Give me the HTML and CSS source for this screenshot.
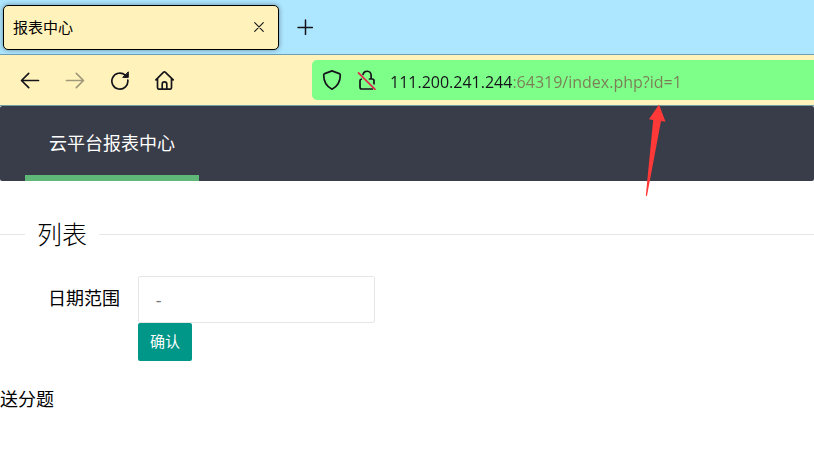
FILE: index.html
```
<!DOCTYPE html>
<html lang="zh-CN">
<head>
    <meta charset="UTF-8">
    <meta name="viewport" content="width=device-width, initial-scale=1.0">
    <title>报表中心</title>
    <link rel="stylesheet" href="styles.css">
</head>
<body>
    <header class="browser">
        <div class="tabStrip">
            <div class="tab">
                <span class="tabTitle">报表中心</span>
                <button class="iconBtn tabClose" type="button" aria-label="关闭标签页">
                    <svg width="10" height="10" viewBox="0 0 10 10"><path d="M.7.7l8.6 8.6M9.3.7L.7 9.3" stroke-width="1.1"/></svg>
                </button>
            </div>
            <button class="iconBtn" type="button" aria-label="新建标签页">
                <svg width="16" height="16" viewBox="0 0 16 16"><path d="M8.500 1v14.500M1 8.500h14.500" stroke-width="1.5"/></svg>
            </button>
        </div>

        <div class="toolbar">
            <nav class="navButtons">
                <button class="iconBtn" type="button" aria-label="后退">
                    <svg width="20" height="20" viewBox="0 0 20 20"><path d="M18.500 10.500H2M8.700 3.300L1.500 10.500l7.200 7.200"/></svg>
                </button>
                <button class="iconBtn" type="button" aria-label="前进" disabled>
                    <svg width="20" height="20" viewBox="0 0 20 20"><path d="M1.500 10.500H18M11.300 3.300L18.500 10.500l-7.200 7.200"/></svg>
                </button>
                <button class="iconBtn" type="button" aria-label="刷新">
                    <svg width="20" height="20" viewBox="0 0 20 20"><path d="M17.800 10A8 8 0 1 1 15.300 5.200"/><path d="M18.300 2.200v5.200h-5.200z" class="solid"/></svg>
                </button>
                <button class="iconBtn" type="button" aria-label="主页">
                    <svg width="20" height="20" viewBox="0 0 20 20"><path d="M.9 9.800L8.600 2.200q.8-.7 1.600 0l8 7.600M2.500 8.500v9q0 1.700 1.700 1.700h10.600q1.700 0 1.700-1.700v-9M7.200 19v-4.800q0-2.300 2.300-2.300t2.300 2.300V19"/></svg>
                </button>
            </nav>
            <div class="urlBar">
                <button class="iconBtn" type="button" aria-label="跟踪保护">
                    <svg width="20" height="20" viewBox="0 0 20 20"><path d="M10 .9L17.300 3.600q1 .4 1 1.500C18.300 11.800 15.800 16.500 10 19.200 4.200 16.500 1.700 11.800 1.700 5.100q0-1.100 1-1.500z"/></svg>
                </button>
                <button class="iconBtn" type="button" aria-label="连接不安全">
                    <svg width="20" height="20" viewBox="0 0 20 20"><path d="M7 4.500a4.100 4.100 0 0 1 8.100.5v4M13.500 9h2.800Q18 9 18 10.700v3M5.300 9.200Q4 9.600 4 10.700v6.600Q4 19 5.700 19h10.600"/><path d="M2.500 2.800l16.500 16.500" class="strike"/></svg>
                </button>
                <input class="urlInput" type="text" aria-label="地址" value="111.200.241.244:64319/index.php?id=1">
            </div>
        </div>
    </header>

    <nav class="siteNav">
        <a class="navItem" href="#">云平台报表中心</a>
        <svg class="arrow" width="22" height="94" viewBox="0 0 22 94"><path d="M14 .5L20.500 17.800l-4.500-.9L2 91.800q-1.200 1-1.100-1L8.200 16l-4.200-.7z"/></svg>
    </nav>

    <main>
        <fieldset class="listField">
            <legend>列表</legend>
        </fieldset>
        <form class="reportForm">
            <label class="formLabel" for="dateRange">日期范围</label>
            <div class="formBlock">
                <input id="dateRange" class="dateInput" type="text" placeholder=" - ">
                <button class="submitBtn" type="submit">确认</button>
            </div>
        </form>
        <p class="note">送分题</p>
    </main>
</body>
</html>
```
FILE: styles.css
```
* {
    box-sizing: border-box;
}

body {
    margin: 0;
    background-color: #ffffff;
    color: #000000;
    font-family: "Open Sans", "Noto Sans CJK SC", sans-serif;
    font-size: 18px;
    line-height: 24px;
}

button,
input {
    font-family: inherit;
}

svg {
    display: block;
    fill: none;
    stroke: #15141a;
    stroke-width: 1.7;
    stroke-linecap: round;
    stroke-linejoin: round;
}

.iconBtn {
    padding: 0;
    border: none;
    background: none;
    cursor: pointer;
}

.iconBtn:disabled {
    opacity: 0.4;
}

.solid {
    fill: #15141a;
    stroke-width: 1;
}

.strike {
    stroke: #e22850;
}

/* browser chrome */
.tabStrip {
    display: flex;
    align-items: center;
    gap: 18px;
    height: 55px;
    padding: 0 3px;
    background-color: #ade6ff;
    border-bottom: 1px solid #6f9fb2;
}

.tab {
    display: flex;
    align-items: center;
    justify-content: space-between;
    width: 276px;
    height: 45px;
    padding: 0 14px 0 9px;
    border: 1px solid #000000;
    border-radius: 5px;
    background-color: #fff3bb;
    box-shadow: 0 0 5px rgba(0, 0, 0, 0.4);
}

.tabTitle {
    font-size: 15px;
}

.toolbar {
    display: flex;
    align-items: center;
    gap: 137px;
    height: 51px;
    padding-left: 20px;
    background-color: #fff3bb;
    border-bottom: 1px solid #6f9fa5;
}

.navButtons {
    display: flex;
    gap: 25px;
}

.urlBar {
    display: flex;
    flex: 1;
    align-items: center;
    gap: 14px;
    min-width: 0;
    height: 40px;
    padding-left: 10px;
    border-radius: 5px 0 0 5px;
    background-color: #7dff8a;
}

/* the host is dark, port and path are muted */
.urlInput {
    flex: 1;
    min-width: 0;
    height: 32px;
    padding: 4px 0 0;
    border: none;
    outline: none;
    background: linear-gradient(to right, #15141a 122px, #7c7d55 122px);
    -webkit-background-clip: text;
    background-clip: text;
    -webkit-text-fill-color: transparent;
    color: #15141a;
    font-size: 16px;
}

/* page */
.siteNav {
    position: relative;
    padding: 0 25px;
    border-radius: 2px;
    background-color: #393d49;
}

.navItem {
    display: inline-block;
    height: 75px;
    padding: 0 24px;
    border-bottom: 6px solid #5fb878;
    color: #ffffff;
    line-height: 75px;
    text-decoration: none;
    vertical-align: top;
}

.arrow {
    position: absolute;
    top: -2px;
    left: 645px;
    stroke: none;
    fill: #ff3838;
}

.listField {
    margin: 35px 0 0;
    padding: 0;
    border: none;
    border-top: 1px solid #e6e6e6;
}

.listField legend {
    margin-left: 25px;
    padding: 0 12px;
    font-size: 25px;
    font-weight: 300;
    line-height: 36px;
}

.reportForm {
    display: flex;
    margin-top: 24px;
}

.formLabel {
    width: 138px;
    padding: 10px 18px 0 0;
    text-align: right;
}

.formBlock {
    display: flex;
    flex-direction: column;
    align-items: flex-start;
}

.dateInput {
    width: 237px;
    height: 47px;
    padding: 0 12px;
    border: 1px solid #e6e6e6;
    border-radius: 2px;
    background-color: #ffffff;
    font-size: 18px;
}

.dateInput::placeholder {
    color: #757575;
}

.submitBtn {
    height: 38px;
    padding: 0 12px 4px;
    border: none;
    border-radius: 2px;
    background-color: #009688;
    color: #ffffff;
    font-size: 15px;
    cursor: pointer;
}

.note {
    margin: 26px 0;
}
```
